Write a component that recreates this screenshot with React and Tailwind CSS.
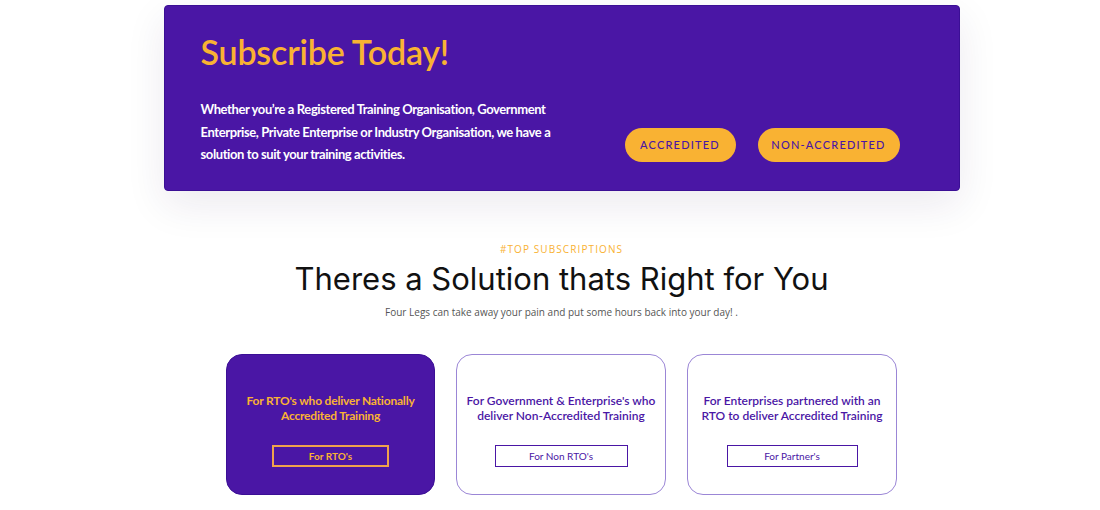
import React from "react";

const cards = [
  {
    title: "For RTO's who deliver Nationally Accredited Training",
    button: "For RTO's",
    active: true,
    btnWidth: "w-[117px]",
  },
  {
    title: "For Government & Enterprise's who deliver Non-Accredited Training",
    button: "For Non RTO's",
    btnWidth: "w-[133px]",
  },
  {
    title: "For Enterprises partnered with an RTO to deliver Accredited Training",
    button: "For Partner's",
    btnWidth: "w-[131px]",
  },
];

function PlanCard({title, button, active, btnWidth}) {
  return (
    <div
      className={
        active
          ? "w-[209px] h-[141px] rounded-[16px] bg-[#4a16a5] border border-[#3b0f95] flex flex-col items-center pt-[38px]"
          : "w-[210px] h-[141px] rounded-[16px] bg-white border border-[#9b86d6] flex flex-col items-center pt-[38px]"
      }
    >
      <p
        className={
          (active ? "text-[#f9b233] font-bold tracking-[-0.2px]" : "text-[#4a16a5] font-semibold") +
          " text-[12px] leading-[15px] text-center px-[6px] h-[40px]"
        }
      >
        {title}
      </p>
      <button
        className={
          (active
            ? "border-2 border-[#f0a24c] text-[#f9b233] font-bold"
            : "border-[1.5px] border-[#4a16a5] text-[#4a16a5]") +
          " " + btnWidth + " h-[22px] mt-[12px] text-[10px] leading-none"
        }
      >
        {button}
      </button>
    </div>
  );
}

export default function App() {
  return (
    <div className="min-h-[510px] bg-white font-['Lato','Open_Sans',sans-serif] pl-[23px] flex flex-col items-center">
      <div className="mt-[5px] w-[796px] h-[186px] bg-[#4a16a5] border border-[#3b0f95] rounded-[4px] shadow-[0_14px_40px_rgba(40,20,80,0.09)] flex items-end pl-[36px] pr-[59px] pb-[28px]">
        <div className="flex-1 self-start pt-[26px]">
          <h2 className="text-[#f9b233] text-[34px] leading-[40px] font-semibold tracking-[-0.2px]">
            Subscribe Today!
          </h2>
          <p className="mt-[26px] w-[355px] text-white text-[13px] leading-[22.5px] font-bold tracking-[-0.4px]">
            Whether you’re a Registered Training Organisation, Government Enterprise, Private Enterprise or Industry Organisation, we have a solution to suit your training activities.
          </p>
        </div>
        <div className="flex gap-[22px]">
          <button className="w-[111px] h-[34px] rounded-full bg-[#f9b233] text-[#4a16a5] text-[11px] tracking-[1.2px] font-medium">
            ACCREDITED
          </button>
          <button className="w-[142px] h-[34px] rounded-full bg-[#f9b233] text-[#4a16a5] text-[11px] tracking-[1.2px] font-medium">
            NON-ACCREDITED
          </button>
        </div>
      </div>

      <p className="mt-[52px] text-[#f9b233] text-[10px] leading-[13px] tracking-[1.1px] font-['Open_Sans',sans-serif]">
        #TOP SUBSCRIPTIONS
      </p>
      <h1 className="mt-[3px] text-[#111] text-[31px] leading-[40px] font-['Inter',sans-serif] font-normal">
        Theres a Solution thats Right for You
      </h1>
      <p className="mt-[6px] text-[#555] text-[10px] leading-[14px] font-['Open_Sans',sans-serif]">
        Four Legs can take away your pain and put some hours back into your day! .
      </p>

      <div className="mt-[35px] flex gap-[21px]">
        {cards.map((c) => (
          <PlanCard key={c.button} {...c} />
        ))}
      </div>
    </div>
  );
}
